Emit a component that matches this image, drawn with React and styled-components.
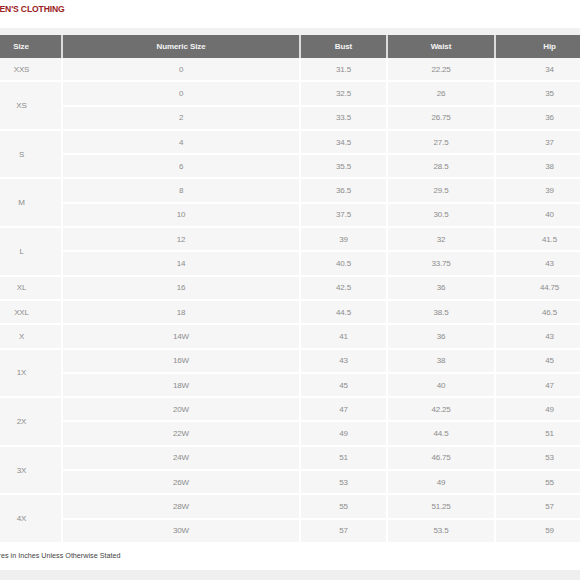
import React from "react";
import styled, { createGlobalStyle } from "styled-components";

const GlobalStyle = createGlobalStyle`
  html, body {
    margin: 0;
    padding: 0;
    background: #ffffff;
    overflow: hidden;
  }
  body {
    font-family: "Liberation Sans", Arial, sans-serif;
  }
`;

const Page = styled.div`
  width: 640px;
  margin-left: -20px;
  margin-top: -9px;
`;

const Crumb = styled.div`
  margin-left: -2px;
  font-size: 10px;
  line-height: 11px;
  color: #8a8a8a;
`;

const Title = styled.h2`
  margin: 1px 0 0 -2px;
  font-size: 8.6px;
  line-height: 12px;
  font-weight: 700;
  color: #9a2222;
  letter-spacing: -0.15px;
`;

const TableWrap = styled.div`
  margin-top: 13px;
  padding-top: 7px;
  background: #f1f1f1;
  width: 623px;
`;

const Table = styled.table`
  width: 623px;
  border-collapse: collapse;
  table-layout: fixed;
`;

const Th = styled.th`
  height: 23px;
  padding: 0;
  background: #6f6f6f;
  color: #f4f4f4;
  font-size: 8px;
  font-weight: 700;
  letter-spacing: -0.1px;
  text-align: center;
  border-left: 2px solid #dcdcdc;
  border-right: 2px solid #dcdcdc;
  &:first-child {
    border-left: none;
  }
`;

const Td = styled.td`
  height: 22.3px;
  padding: 0;
  background: #f6f6f6;
  color: #8c8c8c;
  font-size: 8px;
  letter-spacing: -0.2px;
  text-align: center;
  border: 2px solid #ffffff;
  border-top-width: ${(p) => (p.$first ? 0 : 2)}px;
`;

const Footnote = styled.div`
  background: #ffffff;
  padding: 7px 0 9px;
  margin-left: -3px;
  font-size: 7.2px;
  color: #444444;
  line-height: 10px;
`;

const Band = styled.div`
  height: 20px;
  background: #efefef;
`;

const groups = [
  ["XXS", [["0", "31.5", "22.25", "34"]]],
  ["XS", [["0", "32.5", "26", "35"], ["2", "33.5", "26.75", "36"]]],
  ["S", [["4", "34.5", "27.5", "37"], ["6", "35.5", "28.5", "38"]]],
  ["M", [["8", "36.5", "29.5", "39"], ["10", "37.5", "30.5", "40"]]],
  ["L", [["12", "39", "32", "41.5"], ["14", "40.5", "33.75", "43"]]],
  ["XL", [["16", "42.5", "36", "44.75"]]],
  ["XXL", [["18", "44.5", "38.5", "46.5"]]],
  ["X", [["14W", "41", "36", "43"]]],
  ["1X", [["16W", "43", "38", "45"], ["18W", "45", "40", "47"]]],
  ["2X", [["20W", "47", "42.25", "49"], ["22W", "49", "44.5", "51"]]],
  ["3X", [["24W", "51", "46.75", "53"], ["26W", "53", "49", "55"]]],
  ["4X", [["28W", "55", "51.25", "57"], ["30W", "57", "53.5", "59"]]],
];

const App = () => (
  <>
    <GlobalStyle />
    <Page>
      <Crumb>Professional Wear</Crumb>
      <Title>WOMEN'S CLOTHING</Title>
      <TableWrap>
        <Table>
          <colgroup>
            <col style={{ width: 81 }} />
            <col style={{ width: 238 }} />
            <col style={{ width: 87 }} />
            <col style={{ width: 108 }} />
            <col style={{ width: 109 }} />
          </colgroup>
          <thead>
            <tr>
              <Th>Size</Th>
              <Th>Numeric Size</Th>
              <Th>Bust</Th>
              <Th>Waist</Th>
              <Th>Hip</Th>
            </tr>
          </thead>
          <tbody>
            {groups.map(([size, rows], gi) =>
              rows.map((r, ri) => (
                <tr key={`${size}-${ri}`}>
                  {ri === 0 && (
                    <Td rowSpan={rows.length} $first={gi === 0}>
                      {size}
                    </Td>
                  )}
                  {r.map((v, ci) => (
                    <Td key={ci} $first={gi === 0}>
                      {v}
                    </Td>
                  ))}
                </tr>
              ))
            )}
          </tbody>
        </Table>
      </TableWrap>
      <Footnote>Measures in Inches Unless Otherwise Stated</Footnote>
      <Band />
    </Page>
  </>
);

export default App;
